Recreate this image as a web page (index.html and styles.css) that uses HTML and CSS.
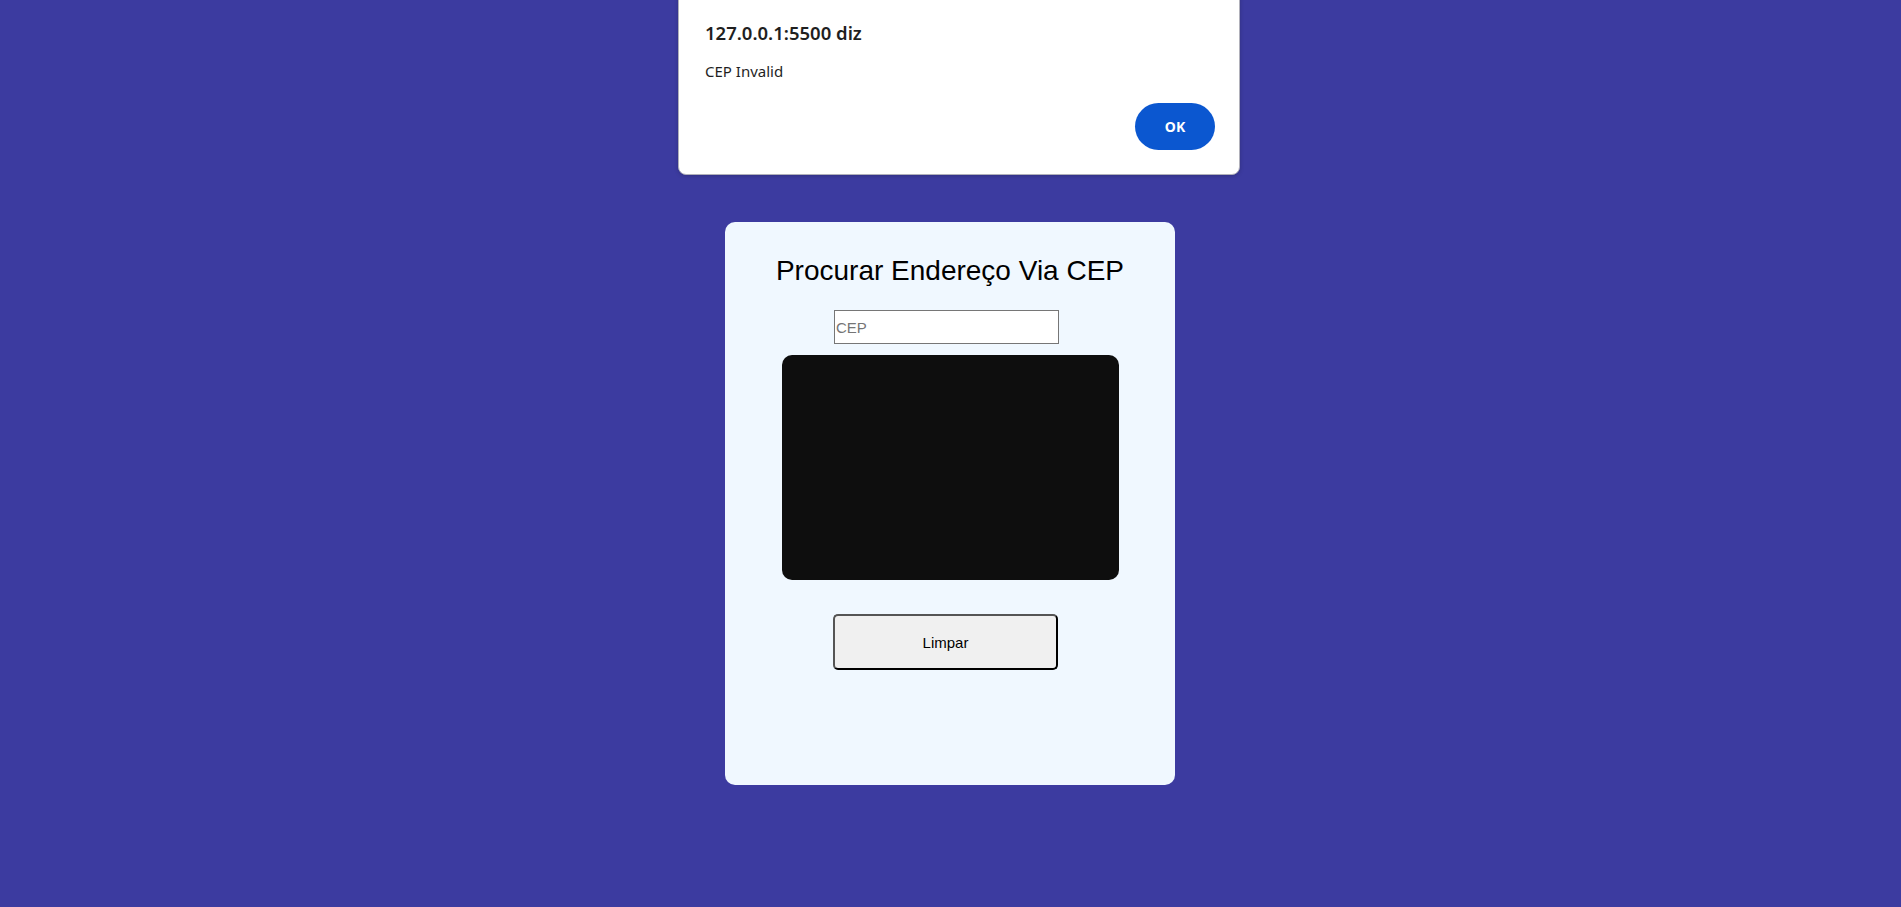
FILE: index.html
```html
<!DOCTYPE html>
<html lang="pt-BR">
<head>
<meta charset="utf-8">
<title>Procurar Endereço Via CEP</title>
<link rel="stylesheet" href="styles.css">
</head>
<body>
<main class="page">
  <section class="card">
    <h1 class="card-title">Procurar Endereço Via CEP</h1>
    <input class="cep-input" type="text" placeholder="CEP">
    <div class="result"></div>
    <button class="clear-btn" type="button">Limpar</button>
  </section>
</main>
<div class="dialog" role="alertdialog">
  <div class="dialog-title">127.0.0.1:5500 diz</div>
  <div class="dialog-msg">CEP Invalid</div>
  <div class="dialog-actions">
    <button class="dialog-ok" type="button">OK</button>
  </div>
</div>
</body>
</html>
```
FILE: styles.css
```css
html, body {
  margin: 0;
  padding: 0;
}
body {
  background: #3c3ba0;
  height: 907px;
  overflow: hidden;
  font-family: "Liberation Sans", Arial, sans-serif;
}
.page {
  display: flex;
  justify-content: center;
  padding-top: 222px;
  padding-right: 1px;
}
.card {
  box-sizing: border-box;
  width: 450px;
  height: 563px;
  background: #f0f8ff;
  border-radius: 10px;
  padding-top: 33px;
  display: flex;
  flex-direction: column;
  align-items: center;
}
.card-title {
  margin: 0;
  font-weight: normal;
  font-size: 28px;
  line-height: 32px;
  color: #000;
}
.cep-input {
  box-sizing: border-box;
  margin-top: 23px;
  margin-right: 7px;
  width: 225px;
  height: 34px;
  padding: 0 1px;
  border: 1px solid #767676;
  background: #fff;
  font-family: "Liberation Sans", Arial, sans-serif;
  font-size: 15px;
  color: #000;
  outline: none;
}
.cep-input::placeholder {
  color: #757575;
}
.result {
  margin-top: 11px;
  width: 337px;
  height: 225px;
  background: #0e0e0e;
  border-radius: 10px;
}
.clear-btn {
  box-sizing: border-box;
  margin-top: 34px;
  margin-right: 9px;
  width: 225px;
  height: 56px;
  background: #f0f0f0;
  border: 2px solid;
  border-color: #555 #000 #000 #555;
  border-radius: 5px;
  font-family: "Liberation Sans", Arial, sans-serif;
  font-size: 15px;
  color: #000;
}
.dialog {
  position: absolute;
  top: -12px;
  left: 678px;
  box-sizing: border-box;
  width: 562px;
  height: 187px;
  background: #fff;
  border: 1px solid #b0b0ba;
  border-radius: 8px;
  box-shadow: 0 1px 4px rgba(0, 0, 0, 0.2);
  padding: 32px 24px 0 26px;
  font-family: "Noto Sans", "Open Sans", sans-serif;
  color: #1f1f1f;
}
.dialog-title {
  font-size: 18.5px;
  line-height: 24px;
  font-weight: 600;
}
.dialog-msg {
  margin-top: 16px;
  font-size: 15px;
  line-height: 20px;
  color: #1f1f1f;
}
.dialog-actions {
  display: flex;
  justify-content: flex-end;
  margin-top: 22px;
}
.dialog-ok {
  width: 80px;
  height: 47px;
  border: none;
  border-radius: 24px;
  background: #0b57d0;
  color: #fff;
  font-family: "Noto Sans", "Open Sans", sans-serif;
  font-size: 14px;
  font-weight: 700;
}
```
